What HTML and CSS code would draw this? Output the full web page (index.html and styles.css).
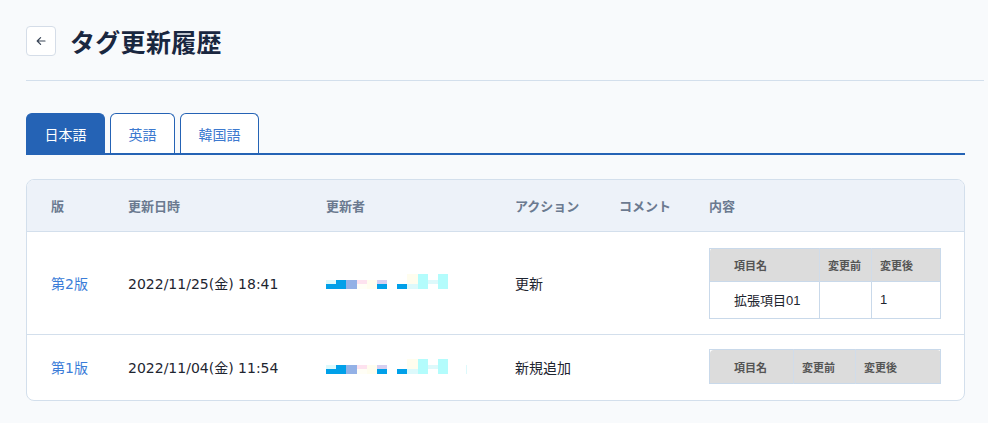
FILE: index.html
```html
<!DOCTYPE html>
<html lang="ja">
<head>
<meta charset="utf-8">
<title>タグ更新履歴</title>
<link rel="stylesheet" href="styles.css">
</head>
<body>
<div class="page">
  <header class="page-header">
    <button class="back-btn" type="button" aria-label="戻る">
      <svg width="12" height="12" viewBox="0 0 12 12" fill="none" stroke="#3a4658" stroke-width="1.2" stroke-linecap="round" stroke-linejoin="round"><path d="M10 6H2.2M5.6 2.6 2.2 6l3.4 3.4"/></svg>
    </button>
    <h1 class="title">タグ更新履歴</h1>
  </header>

  <div class="content">
    <nav class="tabs">
      <button class="tab active" type="button">日本語</button>
      <button class="tab" type="button">英語</button>
      <button class="tab" type="button">韓国語</button>
    </nav>

    <div class="card">
      <div class="row head">
        <div class="cell c1">版</div>
        <div class="cell c2">更新日時</div>
        <div class="cell c3">更新者</div>
        <div class="cell c4">アクション</div>
        <div class="cell c5">コメント</div>
        <div class="cell c6">内容</div>
      </div>

      <div class="row body tall">
        <div class="cell c1 link">第2版</div>
        <div class="cell c2">2022/11/25(金) 18:41</div>
        <div class="cell c3">
          <div class="mosaic">
            <div class="mc"><i class="m"></i><i class="cy1"></i><i class="bl"></i></div>
            <div class="mc"><i class="m"></i><i class="bl"></i><i class="bl"></i></div>
            <div class="mc w11"><i class="m"></i><i class="pv"></i><i class="pv"></i></div>
            <div class="mc"><i class="m"></i><i class="pk"></i><i class="cr2"></i></div>
            <div class="mc"><i class="m"></i><i class="cr"></i><i class="cr"></i></div>
            <div class="mc"><i class="m"></i><i class="lv"></i><i class="bl"></i></div>
            <div class="mc"><i class="m"></i><i class="m"></i><i class="m"></i></div>
            <div class="mc"><i class="m"></i><i class="m"></i><i class="bl"></i></div>
            <div class="mc w11"><i class="cr"></i><i class="cr"></i><i class="cy1"></i></div>
            <div class="mc"><i class="cy2"></i><i class="cy2"></i><i class="cy2"></i></div>
            <div class="mc"><i class="m"></i><i class="cy1"></i><i class="m"></i></div>
            <div class="mc"><i class="cy2"></i><i class="cy2"></i><i class="cy2"></i></div>
          </div>
        </div>
        <div class="cell c4">更新</div>
        <div class="cell c5"></div>
        <div class="cell c6">
          <table class="diff">
            <thead>
              <tr><th class="d1">項目名</th><th class="d2">変更前</th><th class="d3">変更後</th></tr>
            </thead>
            <tbody>
              <tr><td class="d1">拡張項目01</td><td class="d2"></td><td class="d3">1</td></tr>
            </tbody>
          </table>
        </div>
      </div>

      <div class="row body short">
        <div class="cell c1 link">第1版</div>
        <div class="cell c2">2022/11/04(金) 11:54</div>
        <div class="cell c3">
          <div class="mosaic">
            <div class="mc"><i class="m"></i><i class="cy1"></i><i class="bl"></i></div>
            <div class="mc"><i class="m"></i><i class="bl"></i><i class="bl"></i></div>
            <div class="mc w11"><i class="m"></i><i class="pv"></i><i class="pv"></i></div>
            <div class="mc"><i class="m"></i><i class="pk"></i><i class="cr2"></i></div>
            <div class="mc"><i class="m"></i><i class="cr"></i><i class="cr"></i></div>
            <div class="mc"><i class="m"></i><i class="lv"></i><i class="bl"></i></div>
            <div class="mc"><i class="m"></i><i class="m"></i><i class="m"></i></div>
            <div class="mc"><i class="m"></i><i class="m"></i><i class="bl"></i></div>
            <div class="mc w11"><i class="cr"></i><i class="cr"></i><i class="cy1"></i></div>
            <div class="mc"><i class="cy2"></i><i class="cy2"></i><i class="cy2"></i></div>
            <div class="mc"><i class="m"></i><i class="cy1"></i><i class="m"></i></div>
            <div class="mc"><i class="cy2"></i><i class="cy2"></i><i class="cy2"></i></div>
            <div class="mc w18"><i class="m"></i><i class="m"></i><i class="m"></i></div>
            <div class="mc w1"><i class="m"></i><i class="cy1"></i><i class="cy1"></i></div>
          </div>
        </div>
        <div class="cell c4">新規追加</div>
        <div class="cell c5"></div>
        <div class="cell c6">
          <table class="diff diff-empty">
            <thead>
              <tr><th class="d1">項目名</th><th class="d2">変更前</th><th class="d3">変更後</th></tr>
            </thead>
          </table>
        </div>
      </div>
    </div>
  </div>
</div>
</body>
</html>
```
FILE: styles.css
```css
* { box-sizing: border-box; }
html, body { margin: 0; padding: 0; }
body {
  background: #f8fafc;
  font-family: "DejaVu Sans", "Noto Sans CJK JP", sans-serif;
  color: #1e2530;
}
.page { padding: 26px 0 0 26px; }

.page-header {
  display: flex;
  align-items: flex-start;
  gap: 14px;
  height: 55px;
  margin-right: 4px;
  border-bottom: 1px solid #d3dfec;
}
.back-btn {
  width: 30px;
  height: 30px;
  padding: 0;
  border: 1px solid #d5dde8;
  border-radius: 4px;
  background: #fff;
  display: flex;
  align-items: center;
  justify-content: center;
}
.title {
  margin: 0;
  font-family: "Noto Sans CJK JP", sans-serif;
  font-size: 25px;
  line-height: 30px;
  font-weight: 700;
  color: #1a2740;
  letter-spacing: 0.3px;
}

.content { margin-right: 23px; }

.tabs {
  display: flex;
  gap: 5px;
  margin-top: 32px;
  border-bottom: 2px solid #2563b5;
}
.tab {
  height: 40px;
  padding: 0 17.5px;
  font-family: "Noto Sans CJK JP", sans-serif;
  font-size: 14px;
  color: #3c79cf;
  background: #fff;
  border: 1px solid #2563b5;
  border-bottom: none;
  border-radius: 6px 6px 0 0;
}
.tab.active {
  background: #2563b5;
  color: #fff;
}

.card {
  margin-top: 24px;
  background: #fff;
  border: 1px solid #d3dfec;
  border-radius: 8px;
  overflow: hidden;
}
.row {
  display: grid;
  grid-template-columns: 101px 198px 189px 104px 90px 1fr;
  align-items: center;
}
.row.head {
  height: 52px;
  background: #edf2f9;
  border-bottom: 1px solid #d3dfec;
  font-family: "Noto Sans CJK JP", sans-serif;
  font-size: 13px;
  font-weight: 700;
  color: #6b7a90;
}
.row.body { font-size: 14px; color: #1e2530; }
.row.tall { height: 103px; border-bottom: 1px solid #d3dfec; }
.row.short { height: 65px; padding-bottom: 2px; }
.cell.c1 { padding-left: 24px; }
.link { color: #3b7dd8; }

.mosaic { display: flex; height: 15px; margin-top: -3px; }
.row.short .mosaic { margin-top: 0; }
.mc { display: flex; flex-direction: column; width: 10px; }
.mc.w11 { width: 11px; }
.mc.w18 { width: 18px; }
.mc.w1 { width: 1px; }
.mc i { display: block; }
.mc i:nth-child(1) { height: 6px; }
.mc i:nth-child(2) { height: 4px; }
.mc i:nth-child(3) { height: 5px; }
.m { background: transparent; }
.bl { background: #00a0e9; }
.cy1 { background: #ddf9fb; }
.cy2 { background: #b3fcfc; }
.pv { background: #93b1e6; }
.pk { background: #fde2ef; }
.cr { background: #fffdee; }
.cr2 { background: #fffef6; }
.lv { background: #d6cff0; }

.diff {
  width: 231px;
  border-collapse: collapse;
  border: 1px solid #c9d9ea;
  table-layout: fixed;
  font-family: "Liberation Sans", "Noto Sans CJK JP", sans-serif;
}
.diff th {
  height: 33px;
  background: #dcdcdc;
  font-size: 11px;
  font-weight: 700;
  color: #555;
  text-align: left;
  padding: 0 0 0 8px;
  border-left: 1px solid #d0dcea;
}
.diff th:first-child { border-top-left-radius: 4px; border-left: none; }
.diff th:last-child { border-top-right-radius: 4px; }
.diff td {
  height: 37px;
  font-size: 13px;
  color: #1e2530;
  padding: 0 0 0 8px;
  border-left: 1px solid #c9d9ea;
  border-top: 1px solid #c9d9ea;
}
.diff .d1 { padding-left: 24px; }
.diff td.d1 { border-left: none; }
.diff .d1 { width: 110px; }
.diff .d2 { width: 52px; }
.diff .d3 { width: 69px; }
.diff-empty .d1 { width: 84px; }
.diff-empty .d2 { width: 62px; }
.diff-empty .d3 { width: 85px; }
.diff-empty th { height: 34px; }
```
